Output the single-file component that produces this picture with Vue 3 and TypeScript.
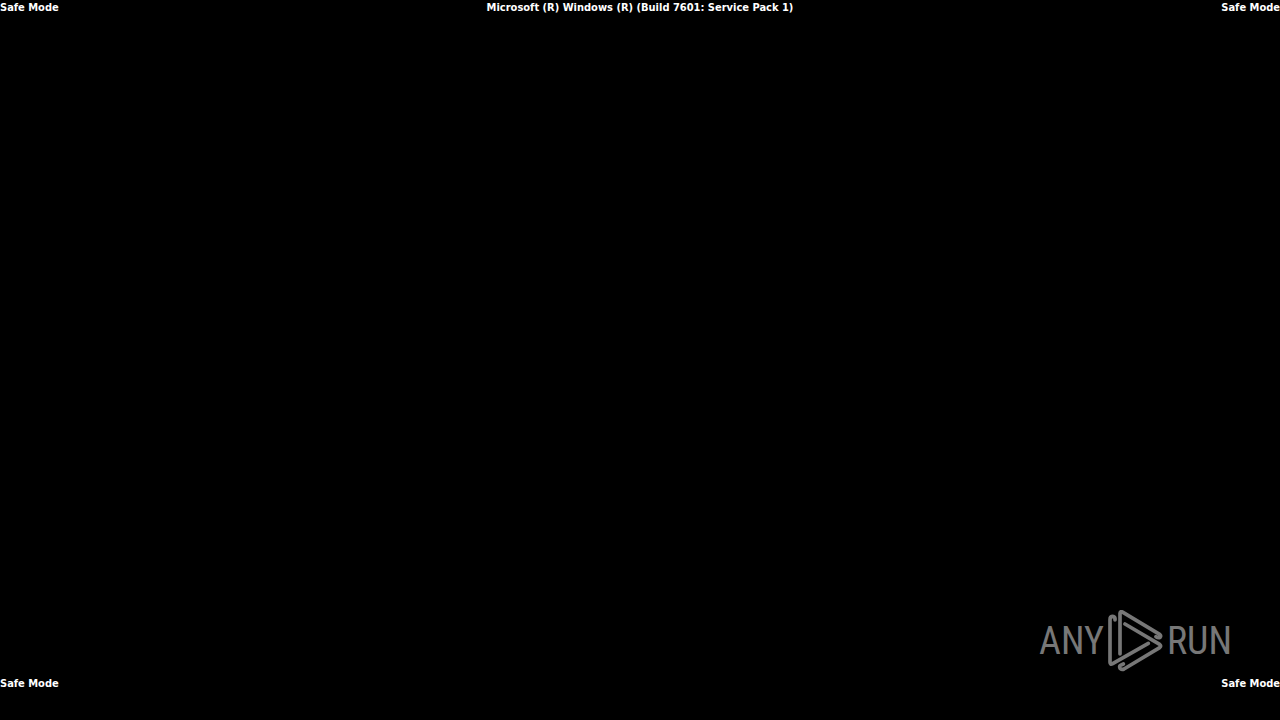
<script setup lang="ts">
const mode: string = 'Safe Mode'
const build: string = 'Microsoft (R) Windows (R) (Build 7601: Service Pack 1)'
</script>

<template>
  <main class="desktop">
    <header class="line">
      <span>{{ mode }}</span>
      <span class="build">{{ build }}</span>
      <span class="end">{{ mode }}</span>
    </header>
    <div class="space"></div>
    <footer class="line">
      <span>{{ mode }}</span>
      <span class="end">{{ mode }}</span>
    </footer>
    <div class="brand" aria-label="ANY RUN">
      <span class="word">ANY</span>
      <svg class="mark" viewBox="29 18 165 186" aria-hidden="true">
        <path d="M50 48V43Q49 37 42 37Q35 38 35 47V175Q35 183 43 179L150 118" />
        <path d="M65 150V28Q66 20 74 25L184 91Q189 96 185 100Q180 103 173 98" />
        <path d="M80 60L184 121Q190 126 184 131L77 195Q71 198 66 194Q62 188 66 184L75 180" />
      </svg>
      <span class="word">RUN</span>
    </div>
  </main>
</template>

<style>
body {
  margin: 0;
  background: #000;
}
</style>

<style scoped>
.desktop {
  position: relative;
  display: flex;
  flex-direction: column;
  min-height: 100vh;
  overflow: hidden;
  box-sizing: border-box;
  padding-bottom: 28px;
  background: #000;
  color: #fff;
  font: bold 11px/16px Tahoma, "DejaVu Sans Condensed", "DejaVu Sans", sans-serif;
}
.space {
  flex: 1;
}
.line {
  display: grid;
  grid-template-columns: 1fr auto 1fr;
  white-space: nowrap;
}
.end {
  grid-column: 3;
  text-align: right;
}
.brand {
  position: absolute;
  right: 48px;
  bottom: 48px;
  display: flex;
  align-items: center;
  gap: 4px;
  color: #777;
}
.word {
  font: 400 38px/48px "Roboto Condensed", "Liberation Sans Narrow", sans-serif;
}
.mark {
  width: 55px;
  height: 62px;
  fill: none;
  stroke: currentColor;
  stroke-width: 11;
  stroke-linecap: round;
  stroke-linejoin: round;
}
</style>
